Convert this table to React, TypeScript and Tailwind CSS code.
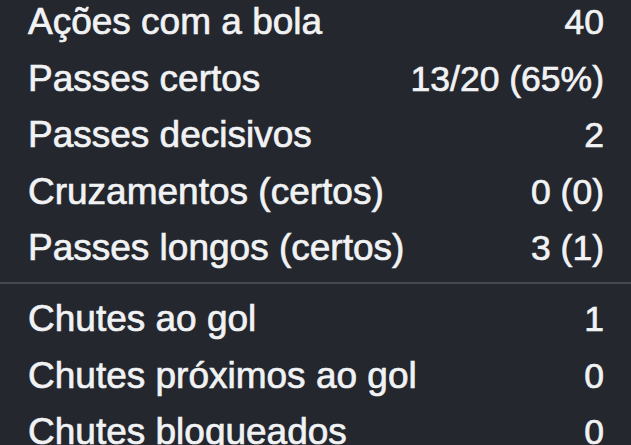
import React from "react";

const group1: [string, string][] = [
  ["Ações com a bola", "40"],
  ["Passes certos", "13/20 (65%)"],
  ["Passes decisivos", "2"],
  ["Cruzamentos (certos)", "0 (0)"],
  ["Passes longos (certos)", "3 (1)"],
];

const group2: [string, string][] = [
  ["Chutes ao gol", "1"],
  ["Chutes próximos ao gol", "0"],
  ["Chutes bloqueados", "0"],
];

function Row({ label, value }: { label: string; value: string }) {
  return (
    <div className="flex h-[56.6px] items-center justify-between pl-[28px] pr-[27px] leading-[56.6px] [-webkit-text-stroke:0.7px_#f1f2f4]">
      <span className="text-[37px] text-[#f1f2f4]">{label}</span>
      <span className="text-[35.5px] text-[#f1f2f4]">{value}</span>
    </div>
  );
}

export default function App() {
  return (
    <div
      className="h-[445px] w-[631px] overflow-hidden bg-[#24272e]"
      style={{ fontFamily: '"Liberation Sans", Arial, sans-serif' }}
    >
      <div className="mt-[-6px] flex flex-col">
        {group1.map(([l, v]) => (
          <Row key={l} label={l} value={v} />
        ))}
        <div className="mt-[5px] mb-[7px] h-[2px] bg-[#45484e]" />
        {group2.map(([l, v]) => (
          <Row key={l} label={l} value={v} />
        ))}
      </div>
    </div>
  );
}
